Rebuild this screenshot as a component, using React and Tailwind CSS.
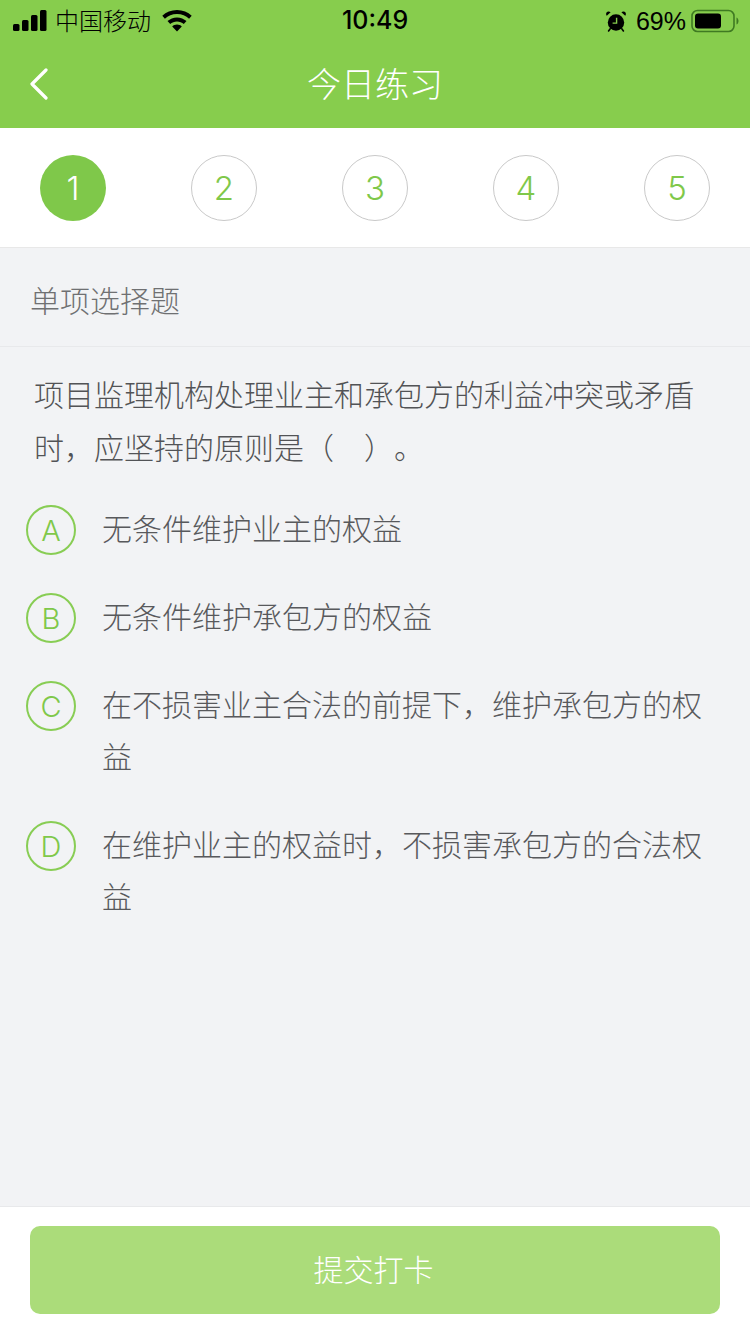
import React, { useState } from "react";

const STEPS = [1, 2, 3, 4, 5];

const OPTIONS = [
  { key: "A", text: "无条件维护业主的权益" },
  { key: "B", text: "无条件维护承包方的权益" },
  { key: "C", text: "在不损害业主合法的前提下，维护承包方的权益" },
  { key: "D", text: "在维护业主的权益时，不损害承包方的合法权益" },
];

function SignalIcon() {
  return (
    <svg width="34" height="22" viewBox="0 0 34 22" fill="#000">
      <rect x="0" y="14" width="6.500" height="7" rx="1.500" />
      <rect x="9" y="10" width="6.500" height="11" rx="1.500" />
      <rect x="18" y="5" width="6.500" height="16" rx="1.500" />
      <rect x="27" y="0" width="6.500" height="21" rx="1.500" />
    </svg>
  );
}

function WifiIcon() {
  return (
    <svg width="30" height="22" viewBox="0 0 30 22" fill="#000">
      <path d="M15 0C9.200 0 4.100 2.200.3 5.800l2.600 2.900C6 5.700 10.200 3.900 15 3.900s9 1.800 12.100 4.800l2.600-2.900C25.900 2.200 20.800 0 15 0z" />
      <path d="M15 7.400c-3.700 0-7 1.400-9.500 3.700l2.700 2.900c1.800-1.600 4.200-2.600 6.800-2.600s5 1 6.800 2.600l2.700-2.900C22 8.800 18.700 7.400 15 7.400z" />
      <path d="M15 14.600c-1.900 0-3.500.7-4.800 1.800L15 21.600l4.800-5.200c-1.300-1.100-2.900-1.800-4.800-1.800z" />
    </svg>
  );
}

function AlarmIcon() {
  return (
    <svg width="20" height="21" viewBox="0 0 20 21" fill="#000">
      <circle cx="10" cy="11.500" r="8.200" />
      <path d="M.8 4.800 4.600 1.300C3.300.1 1.300.3.500 1.600-.1 2.600 0 3.900.8 4.800zM19.200 4.800 15.400 1.300c1.300-1.200 3.300-1 4.100.3.600 1 .5 2.300-.3 3.200z" />
      <path d="M4.200 17.800 2.600 20M15.800 17.800l1.600 2.200" stroke="#000" strokeWidth="1.600" strokeLinecap="round" />
      <path d="M10.600 6.800v5.300H6.600" fill="none" stroke="#87cd4d" strokeWidth="1.400" />
    </svg>
  );
}

function BatteryIcon() {
  return (
    <svg width="48" height="24" viewBox="0 0 48 24">
      <rect x="1" y="1.500" width="42" height="21" rx="5.500" fill="none" stroke="#3f7a22" strokeWidth="1.600" />
      <rect x="4" y="4.500" width="26" height="15" rx="3" fill="#000" />
      <path d="M45.500 8.500c1.300.5 2 2 2 3.500s-.7 3-2 3.500z" fill="#3f7a22" />
    </svg>
  );
}

function BackIcon() {
  return (
    <svg width="20" height="32" viewBox="0 0 20 32" fill="none" stroke="#fff" strokeWidth="3.200" strokeLinecap="round" strokeLinejoin="round">
      <path d="M17 2 3 16l14 14" />
    </svg>
  );
}

export default function App() {
  const [current, setCurrent] = useState(1);
  const [picked, setPicked] = useState(null);

  return (
    <div className="flex h-[1334px] w-[750px] flex-col overflow-hidden bg-[#f2f3f5] font-['Liberation_Sans','Noto_Sans_CJK_SC',sans-serif]">
      {/* Status bar + title */}
      <header className="bg-[#87cd4d]">
        <div className="relative flex h-10 items-center justify-between pl-[13px] pr-[11px] pt-[2px] text-black">
          <div className="flex items-center">
            <SignalIcon />
            <span className="ml-[8px] pt-[2px] text-[24px] font-light leading-none">中国移动</span>
            <span className="ml-[11px]">
              <WifiIcon />
            </span>
          </div>
          <span className="absolute left-0 right-0 text-center font-['Inter',sans-serif] text-[25px] font-medium">10:49</span>
          <div className="flex items-center">
            <AlarmIcon />
            <span className="ml-[10px] mr-[5px] pt-[1px] text-[25px] leading-none">69%</span>
            <BatteryIcon />
          </div>
        </div>
        <div className="relative flex h-[88px] items-center justify-center pt-[2px]">
          <span className="absolute left-[29px] top-[28px]">
            <BackIcon />
          </span>
          <h1 className="text-[34px] font-light text-white">今日练习</h1>
        </div>
      </header>

      {/* Question switcher */}
      <nav className="flex items-center justify-between border-b border-[#e8e8e8] bg-white px-10 pb-[26px] pt-[27px] font-['Inter',sans-serif]">
        {STEPS.map((n) =>
          n === current ? (
            <button
              key={n}
              type="button"
              onClick={() => setCurrent(n)}
              className="flex h-[66px] w-[66px] items-center justify-center rounded-full bg-[#7fc84a] pt-[2px] text-[33px] font-light text-white"
            >
              {n}
            </button>
          ) : (
            <button
              key={n}
              type="button"
              onClick={() => setCurrent(n)}
              className="flex h-[66px] w-[66px] items-center justify-center rounded-full border border-[#c9c9c9] bg-white pt-[2px] text-[33px] font-light text-[#7fc84a]"
            >
              {n}
            </button>
          )
        )}
      </nav>

      {/* Question body */}
      <main className="flex-1">
        <div className="flex h-[99px] items-center border-b border-[#e8e9eb] pl-[30px] pt-[10px] text-[30px] font-light leading-none text-[#6f7072]">
          单项选择题
        </div>
        <p className="px-[34px] pt-[22px] text-[30px] font-light leading-[53px] text-[#525356] [text-spacing-trim:space-all]">
          项目监理机构处理业主和承包方的利益冲突或矛盾时，应坚持的原则是（　）。
        </p>
        <ul className="mt-[29px] flex flex-col gap-9 pl-[26px] pr-[40px]">
          {OPTIONS.map((opt) => (
            <li key={opt.key} className="flex cursor-pointer items-start gap-[26px]" onClick={() => setPicked(opt.key)}>
              <span
                className={
                  picked === opt.key
                    ? "mt-px flex h-[50px] w-[50px] shrink-0 items-center justify-center rounded-full border-2 border-[#7fc84a] bg-[#7fc84a] pt-[2px] font-['Inter',sans-serif] text-[29px] font-light text-white"
                    : "mt-px flex h-[50px] w-[50px] shrink-0 items-center justify-center rounded-full border-2 border-[#88cd54] pt-[2px] font-['Inter',sans-serif] text-[29px] font-light text-[#7fc84a]"
                }
              >
                {opt.key}
              </span>
              <span className="text-[30px] font-light leading-[52px] text-[#58595c]">{opt.text}</span>
            </li>
          ))}
        </ul>
      </main>

      {/* Submit */}
      <footer className="border-t border-[#e8e9eb] bg-white px-[30px] pb-[20px] pt-[19px]">
        <button
          type="button"
          className="flex h-[88px] w-full items-center justify-center rounded-[10px] bg-[#abdc7a] pr-[3px] text-[30px] font-light text-white"
        >
          提交打卡
        </button>
      </footer>
    </div>
  );
}
